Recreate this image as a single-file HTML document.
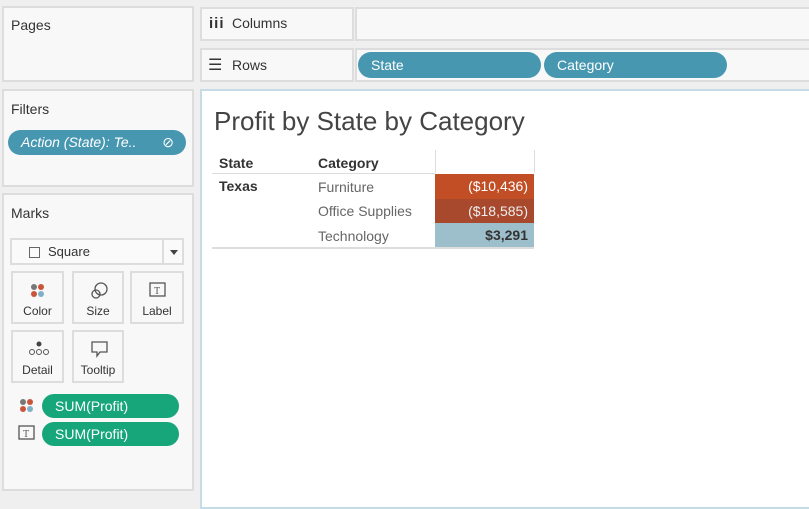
<!DOCTYPE html>
<html><head><style>
body{margin:0;width:809px;height:499px;background:#efefef;font-family:"Liberation Sans",sans-serif;position:relative;overflow:hidden;color:#333}
.p{position:absolute;background:#f8f8f8;border:2px solid #ddd;box-sizing:border-box}
.t{position:absolute;font-size:14px;color:#333}
.pill{position:absolute;border-radius:13px;color:#fff;font-size:14px;box-sizing:border-box;padding-left:13px;line-height:24px}
.b{position:absolute;background:#f8f8f8;border:2px solid #ddd;box-sizing:border-box;text-align:center;font-size:12px;color:#333}
.b span{position:absolute;left:0;right:0;bottom:4px}
.c{position:absolute;font-size:14px}
</style></head><body>
<div class="p" style="left:2px;top:6px;width:192px;height:76px"></div>
<div class="t" style="left:11px;top:17px">Pages</div>
<div class="p" style="left:2px;top:89px;width:192px;height:98px"></div>
<div class="t" style="left:11px;top:101px">Filters</div>
<div class="pill" style="left:8px;top:130px;width:178px;height:25px;background:#4897b1;font-style:italic">Action (State): Te.. <span style="position:absolute;right:12px;font-style:normal">⊘</span></div>
<div class="p" style="left:2px;top:193px;width:192px;height:298px"></div>
<div class="t" style="left:11px;top:205px">Marks</div>
<div style="position:absolute;left:10px;top:238px;width:174px;height:27px;border:2px solid #ddd;box-sizing:border-box;background:#fafafa">
<div style="position:absolute;left:17px;top:7px;width:9px;height:9px;border:1px solid #666"></div>
<div style="position:absolute;left:36px;top:4px;font-size:13px">Square</div>
<div style="position:absolute;left:150px;top:0;width:2px;height:23px;background:#ddd"></div>
<div style="position:absolute;left:158px;top:10px;border:4px solid transparent;border-top:5px solid #444"></div></div>
<div class="b" style="left:11px;top:271px;width:53px;height:53px">
<svg style="position:absolute;left:17px;top:10px" width="16" height="16"><circle cx="4" cy="4" r="3" fill="#777"/><circle cx="11" cy="4" r="3" fill="#c8553a"/><circle cx="4" cy="11" r="3" fill="#c8553a"/><circle cx="11" cy="11" r="3" fill="#7fb0c8"/></svg><span>Color</span></div>
<div class="b" style="left:72px;top:271px;width:52px;height:53px">
<svg style="position:absolute;left:16px;top:8px" width="20" height="20"><circle cx="11" cy="8" r="6" fill="none" stroke="#555" stroke-width="1.3"/><circle cx="6" cy="13" r="4" fill="none" stroke="#555" stroke-width="1.3"/></svg><span>Size</span></div>
<div class="b" style="left:130px;top:271px;width:54px;height:53px">
<svg style="position:absolute;left:17px;top:9px" width="18" height="16"><rect x="1" y="1" width="15" height="13" fill="none" stroke="#555" stroke-width="1.3"/><text x="5" y="12" font-size="10" font-family="Liberation Serif" fill="#555">T</text></svg><span>Label</span></div>
<div class="b" style="left:11px;top:330px;width:53px;height:53px">
<svg style="position:absolute;left:15px;top:8px" width="22" height="18"><circle cx="11" cy="4" r="2.5" fill="#444"/><circle cx="4" cy="12" r="2.5" fill="none" stroke="#555"/><circle cx="11" cy="12" r="2.5" fill="none" stroke="#555"/><circle cx="18" cy="12" r="2.5" fill="none" stroke="#555"/></svg><span>Detail</span></div>
<div class="b" style="left:72px;top:330px;width:52px;height:53px">
<svg style="position:absolute;left:16px;top:8px" width="20" height="18"><path d="M2 2h15v10h-7l-3 4v-4h-5z" fill="none" stroke="#555" stroke-width="1.3"/></svg><span>Tooltip</span></div>
<svg style="position:absolute;left:19px;top:398px" width="16" height="16"><circle cx="4" cy="4" r="3" fill="#777"/><circle cx="11" cy="4" r="3" fill="#c8553a"/><circle cx="4" cy="11" r="3" fill="#c8553a"/><circle cx="11" cy="11" r="3" fill="#7fb0c8"/></svg>
<svg style="position:absolute;left:18px;top:425px" width="18" height="16"><rect x="1" y="1" width="15" height="13" fill="none" stroke="#555" stroke-width="1.3"/><text x="5" y="12" font-size="10" font-family="Liberation Serif" fill="#555">T</text></svg>
<div class="pill" style="left:42px;top:394px;width:137px;height:24px;background:#17a67a">SUM(Profit)</div>
<div class="pill" style="left:42px;top:422px;width:137px;height:24px;background:#17a67a">SUM(Profit)</div>
<div class="p" style="left:200px;top:7px;width:154px;height:34px"></div>
<div class="p" style="left:355px;top:7px;width:460px;height:34px"></div>
<div style="position:absolute;left:209px;top:15px;font-size:15px;font-weight:bold;letter-spacing:1px">iii</div>
<div class="t" style="left:232px;top:15px">Columns</div>
<div class="p" style="left:200px;top:48px;width:154px;height:34px"></div>
<div class="p" style="left:355px;top:48px;width:460px;height:34px"></div>
<div style="position:absolute;left:208px;top:55px;font-size:16px">☰</div>
<div class="t" style="left:232px;top:57px">Rows</div>
<div class="pill" style="left:358px;top:52px;width:183px;height:26px;background:#4897b1;line-height:26px">State</div>
<div class="pill" style="left:544px;top:52px;width:183px;height:26px;background:#4897b1;line-height:26px">Category</div>
<div style="position:absolute;left:200px;top:89px;width:620px;height:420px;background:#fff;border:2px solid #c5dbe5;box-sizing:border-box"></div>
<div style="position:absolute;left:214px;top:106px;font-size:26px;color:#444">Profit by State by Category</div>
<div class="c" style="left:219px;top:155px;font-weight:bold">State</div>
<div class="c" style="left:318px;top:155px;font-weight:bold">Category</div>
<div style="position:absolute;left:435px;top:150px;width:1px;height:23px;background:#ddd"></div>
<div style="position:absolute;left:534px;top:150px;width:1px;height:23px;background:#ddd"></div>
<div style="position:absolute;left:212px;top:173px;width:223px;height:1px;background:#ddd"></div>
<div class="c" style="left:219px;top:178px;font-weight:bold">Texas</div>
<div class="c" style="left:318px;top:179px;color:#666">Furniture</div>
<div class="c" style="left:318px;top:203px;color:#666">Office Supplies</div>
<div class="c" style="left:318px;top:228px;color:#666">Technology</div>
<div class="c" style="left:435px;top:174px;width:99px;height:25px;background:#c24e26;color:#fff;text-align:right;box-sizing:border-box;padding-right:6px;line-height:25px">($10,436)</div>
<div class="c" style="left:435px;top:199px;width:99px;height:24px;background:#a8492e;color:#eee;text-align:right;box-sizing:border-box;padding-right:6px;line-height:24px">($18,585)</div>
<div class="c" style="left:435px;top:223px;width:99px;height:24px;background:#9dbfcc;color:#333;font-weight:bold;text-align:right;box-sizing:border-box;padding-right:6px;line-height:24px">$3,291</div>
<div style="position:absolute;left:212px;top:247px;width:322px;height:2px;background:#ddd"></div>
</body></html>
